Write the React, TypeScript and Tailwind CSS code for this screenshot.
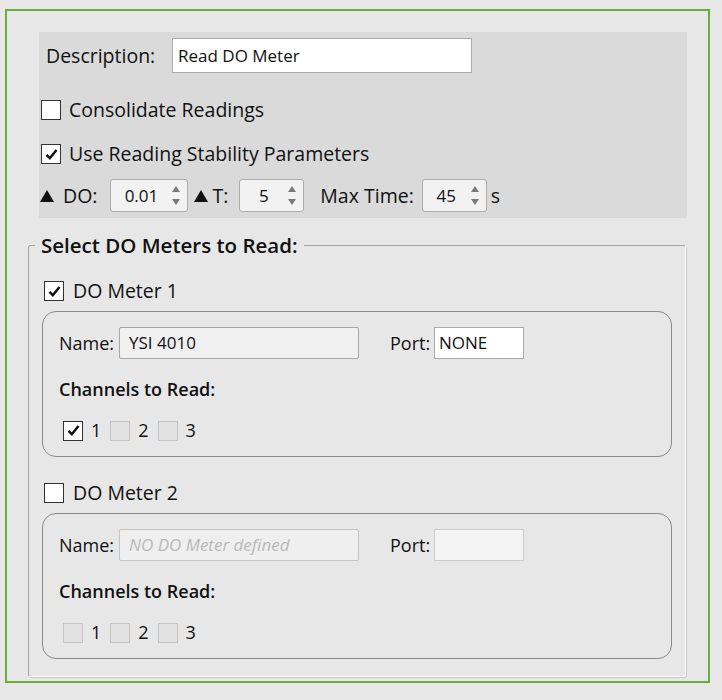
import React from "react";

const font = "font-['Open_Sans','Noto_Sans',sans-serif]";

function Check() {
  return (
    <svg viewBox="0 0 18 18" className="w-[15px] h-[15px]">
      <path d="M3 9.5 L7 13.5 L15 3.5" fill="none" stroke="#111" strokeWidth="3" strokeLinejoin="miter" />
    </svg>
  );
}

function CheckBox({ checked, disabled }: { checked?: boolean; disabled?: boolean }) {
  return (
    <div
      className={`w-[20px] h-[20px] shrink-0 flex items-center justify-center border ${
        disabled ? "border-[#c6c6c6] bg-[#e2e2e2]" : "border-[#333] bg-white"
      }`}
    >
      {checked && <Check />}
    </div>
  );
}

function Triangle() {
  return (
    <svg viewBox="0 0 14 12" className="w-[14px] h-[12px]">
      <path d="M7 0 L14 12 L0 12 Z" fill="#111" />
    </svg>
  );
}

function Spin({ value, width }: { value: string; width: string }) {
  return (
    <div className={`${width} h-[33px] flex items-center rounded-[3px] border border-[#acacac] bg-[#f2f2f2]`}>
      <span className="flex-1 text-center text-[17px] leading-none pl-[2px]">{value}</span>
      <div className="w-[18px] flex flex-col items-center gap-[7px] pr-[4px]">
        <svg viewBox="0 0 8 6" className="w-[8px] h-[6px]"><path d="M4 0 L8 6 L0 6 Z" fill="#7a7a7a" /></svg>
        <svg viewBox="0 0 8 6" className="w-[8px] h-[6px]"><path d="M0 0 L8 0 L4 6 Z" fill="#7a7a7a" /></svg>
      </div>
    </div>
  );
}

function MeterBlock({ title, checked, name, port, placeholder, channels }: {
  title: string; checked: boolean; name?: string; port?: string; placeholder?: string; channels: boolean[];
}) {
  const off = !checked;
  return (
    <div>
      <div className="flex items-center gap-[9px] pl-[15px] h-[30px]">
        <CheckBox checked={checked} />
        <span className="text-[19.5px]">{title}</span>
      </div>
      <div className="ml-[13px] mt-[5px] w-[630px] h-[146px] rounded-[14px] border border-[#8a8a8a] pl-[16px] pt-[15px]">
        <div className="flex items-center h-[32px]">
          <span className="text-[18px] w-[60px]">Name:</span>
          <div className={`w-[240px] h-[32px] flex items-center px-[9px] rounded-[2px] border ${off ? "border-[#c4c4c4] bg-[#efefef]" : "border-[#a5a5a5] bg-[#f0f0f0]"}`}>
            {name ? (
              <span className="text-[17px]">{name}</span>
            ) : (
              <span className="text-[17px] italic text-[#b9b9b9]">{placeholder}</span>
            )}
          </div>
          <span className="text-[18px] ml-[31px] w-[44px]">Port:</span>
          <div className={`w-[90px] h-[32px] flex items-center px-[4px] border ${off ? "border-[#cbcbcb] bg-[#f4f4f4]" : "border-[#a9a9a9] bg-white"}`}>
            <span className="text-[17px]">{port}</span>
          </div>
        </div>
        <div className="mt-[17px] text-[18px] font-semibold">Channels to Read:</div>
        <div className="mt-[14px] flex items-center pl-[4px]">
          {channels.map((c, i) => (
            <div key={i} className="flex items-center">
              <CheckBox checked={c} disabled={off || !c} />
              <span className={`text-[18px] ml-[8px] ${i < 2 ? "mr-[9px]" : ""}`}>{i + 1}</span>
            </div>
          ))}
        </div>
      </div>
    </div>
  );
}

export default function App() {
  return (
    <div className={`w-[722px] h-[700px] bg-[#e7e7e7] pt-[9px] pl-[5px] text-[#111] ${font}`}>
      <div className="w-[705px] h-[674px] border-2 border-[#66ad3d] pt-[21px]">
        {/* settings panel */}
        <div className="ml-[32px] w-[648px] h-[186px] bg-[#dadada] pt-[6px]">
          <div className="flex items-center h-[35px] pl-[7px]">
            <span className="text-[19.5px] w-[126px]">Description:</span>
            <div className="w-[300px] h-[35px] flex items-center px-[5px] bg-white border border-[#ababab]">
              <span className="text-[17px]">Read DO Meter</span>
            </div>
          </div>
          <div className="flex items-center h-[20px] gap-[8px] pl-[2px] mt-[27px]">
            <CheckBox />
            <span className="text-[19.5px] leading-none">Consolidate Readings</span>
          </div>
          <div className="flex items-center h-[20px] gap-[8px] pl-[2px] mt-[24px]">
            <CheckBox checked />
            <span className="text-[19.5px] leading-none">Use Reading Stability Parameters</span>
          </div>
          <div className="flex items-center h-[33px] pl-[1px] mt-[15px] text-[19.5px] leading-none">
            <Triangle />
            <span className="ml-[9px] mr-[13px]">DO:</span>
            <Spin value="0.01" width="w-[78px]" />
            <div className="ml-[6px]"><Triangle /></div>
            <span className="ml-[4px] mr-[11px]">T:</span>
            <Spin value="5" width="w-[65px]" />
            <span className="ml-[16px] mr-[8px]">Max Time:</span>
            <Spin value="45" width="w-[65px]" />
            <span className="ml-[4px]">s</span>
          </div>
        </div>

        {/* meter selection */}
        <fieldset className="ml-[21px] mt-[14px] w-[658px] h-[445px] rounded-[3px] border border-[#a3a3a3] border-r-white border-b-white shadow-[1px_1px_0_#c9c9c9]">
          <legend className="ml-[6px] px-[6px] text-[20.5px] font-semibold leading-[26px]">Select DO Meters to Read:</legend>
          <div className="mt-[18px]">
            <MeterBlock title="DO Meter 1" checked name="YSI 4010" port="NONE" channels={[true, false, false]} />
          </div>
          <div className="mt-[21px]">
            <MeterBlock title="DO Meter 2" checked={false} placeholder="NO DO Meter defined" channels={[false, false, false]} />
          </div>
        </fieldset>
      </div>
    </div>
  );
}
